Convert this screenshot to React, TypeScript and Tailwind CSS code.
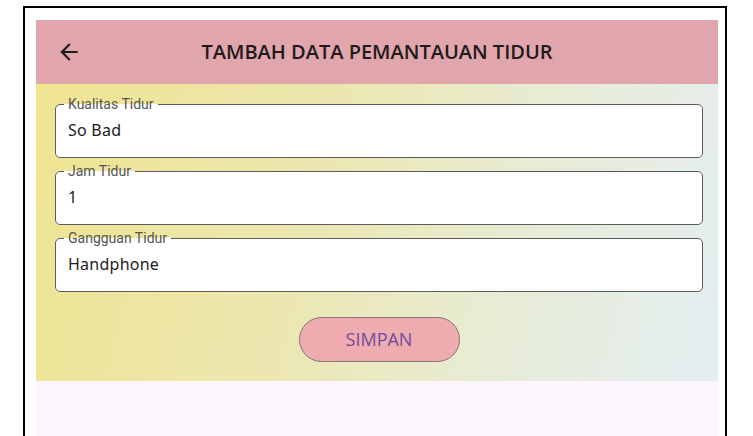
import React from "react";

function BackArrow() {
  return (
    <svg width="26" height="26" viewBox="0 0 24 24" fill="#1f1b1e" aria-hidden="true">
      <path d="M20 11H7.83l5.59-5.59L12 4l-8 8 8 8 1.41-1.41L7.83 13H20v-2z" />
    </svg>
  );
}

function Field({ label, value }: { label: string; value: string }) {
  return (
    <fieldset className="h-[61px] rounded-[5px] border border-[#5c5c5c] bg-white px-[12px] m-0">
      <legend className="ml-[-4px] px-[4px] text-[14px] leading-[14px] text-[#555555] bg-transparent" style={{ fontFamily: "Roboto, 'Noto Sans', sans-serif" }}>
        {label}
      </legend>
      <div className="pt-[9px] text-[16px] leading-[20px] tracking-[0.25px] text-[#1c1b1f]" style={{ fontFamily: "'Noto Sans', sans-serif" }}>
        {value}
      </div>
    </fieldset>
  );
}

export default function App() {
  return (
    <div className="w-[753px] h-[436px] bg-white overflow-hidden">
      <div className="ml-[23px] w-[704px] h-[436px] border-x-2 border-black">
        <div className="mt-[6px] h-[430px] border-t-2 border-black pt-[12px] pl-[11px] pr-[7px] flex flex-col">
          <div className="h-[64px] shrink-0 bg-[#e1a5ac] grid grid-cols-[64px_1fr_64px] items-center">
            <div className="pl-[20px] flex items-center">
              <BackArrow />
            </div>
            <div className="text-center text-[20px] font-semibold text-[#201a1b]" style={{ fontFamily: "'Open Sans', sans-serif" }}>
              TAMBAH DATA PEMANTAUAN TIDUR
            </div>
            <div />
          </div>
          <div className="h-[297px] shrink-0 bg-[linear-gradient(105deg,#efe491_0%,#ece7b0_40%,#e7ecd6_70%,#e3eef2_100%)] pt-[13px] pl-[19px] pr-[15px] flex flex-col gap-[6px]">
            <Field label="Kualitas Tidur" value="So Bad" />
            <Field label="Jam Tidur" value="1" />
            <Field label="Gangguan Tidur" value="Handphone" />
            <div className="mt-[19px] flex justify-center">
              <button className="w-[161px] h-[45px] rounded-full border border-[#857577] bg-[#efacb0] text-[18px] text-[#6f4a9e]" style={{ fontFamily: "'Open Sans', sans-serif" }}>
                SIMPAN
              </button>
            </div>
          </div>
          <div className="flex-1 bg-[#fcf5fc]" />
        </div>
      </div>
    </div>
  );
}
